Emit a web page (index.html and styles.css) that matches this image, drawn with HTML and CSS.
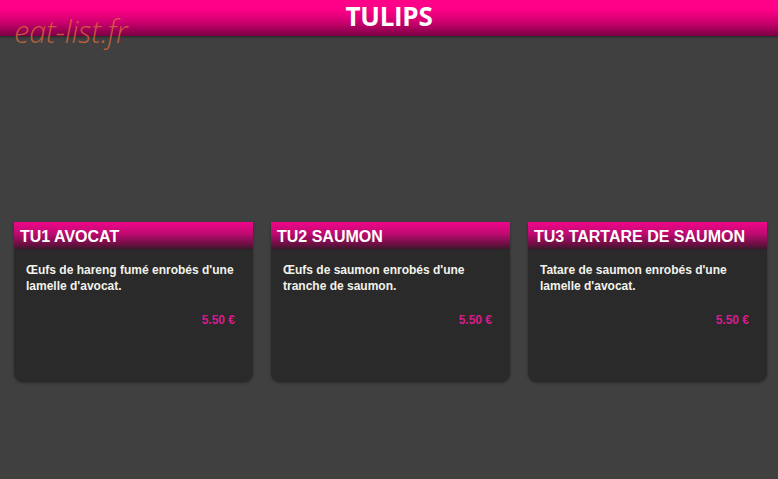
FILE: index.html
```html
<!DOCTYPE html>
<html lang="fr">
<head>
<meta charset="utf-8">
<link rel="stylesheet" href="styles.css">
</head>
<body>
<header class="topbar">
  <h1 class="title">TULIPS</h1>
  <div class="logo">eat-list.fr</div>
</header>
<main class="cards">
  <section class="card">
    <h2 class="card-title">TU1 AVOCAT</h2>
    <div class="card-body">
      <p class="desc">Œufs de hareng fumé enrobés d'une lamelle d'avocat.</p>
      <p class="price">5.50 €</p>
    </div>
  </section>
  <section class="card">
    <h2 class="card-title">TU2 SAUMON</h2>
    <div class="card-body">
      <p class="desc">Œufs de saumon enrobés d'une tranche de saumon.</p>
      <p class="price">5.50 €</p>
    </div>
  </section>
  <section class="card">
    <h2 class="card-title">TU3 TARTARE DE SAUMON</h2>
    <div class="card-body">
      <p class="desc">Tatare de saumon enrobés d'une lamelle d'avocat.</p>
      <p class="price">5.50 €</p>
    </div>
  </section>
</main>
</body>
</html>
```
FILE: styles.css
```css
html, body {
  margin: 0;
  padding: 0;
}
body {
  background: #404040;
  width: 778px;
  height: 479px;
  overflow: hidden;
  font-family: "Liberation Sans", Arial, sans-serif;
}
.topbar {
  position: relative;
  height: 36px;
  background: linear-gradient(to bottom, #ff0088 0%, #ff0088 25%, #d00070 60%, #7a0044 100%);
  box-shadow: 0 1px 2px rgba(0,0,0,0.4);
}
.title {
  margin: 0;
  text-align: center;
  font-family: "Open Sans", sans-serif;
  font-weight: 700;
  font-size: 26px;
  line-height: 33px;
  color: #fff;
  letter-spacing: -0.3px;
}
.logo {
  position: absolute;
  left: 14px;
  top: 11px;
  font-family: "Open Sans", sans-serif;
  font-style: italic;
  font-weight: 300;
  font-size: 31px;
  line-height: 40px;
  color: rgba(220, 110, 60, 0.75);
  letter-spacing: -0.3px;
}
.cards {
  display: flex;
  gap: 18px;
  padding: 186px 0 0 14px;
}
.card {
  width: 239px;
  height: 160px;
  background: #2a2a2a;
  border-radius: 0 0 9px 9px;
  box-shadow: 0 1px 3px rgba(0,0,0,0.35);
}
.card-title {
  margin: 0;
  height: 28px;
  padding: 0 6px;
  font-size: 16px;
  font-weight: 700;
  line-height: 29px;
  color: #fff;
  background: linear-gradient(to bottom, #f0058a 0%, #c20a72 40%, #6a0f42 80%, #2e1e26 100%);
  white-space: nowrap;
}
.card-body {
  padding: 12px 18px 0 12px;
}
.desc {
  margin: 0;
  font-size: 12px;
  font-weight: 700;
  line-height: 16px;
  color: #f2f2ea;
}
.price {
  margin: 18px 0 0;
  text-align: right;
  font-size: 12px;
  font-weight: 700;
  line-height: 16px;
  color: #d81a8c;
}
```
